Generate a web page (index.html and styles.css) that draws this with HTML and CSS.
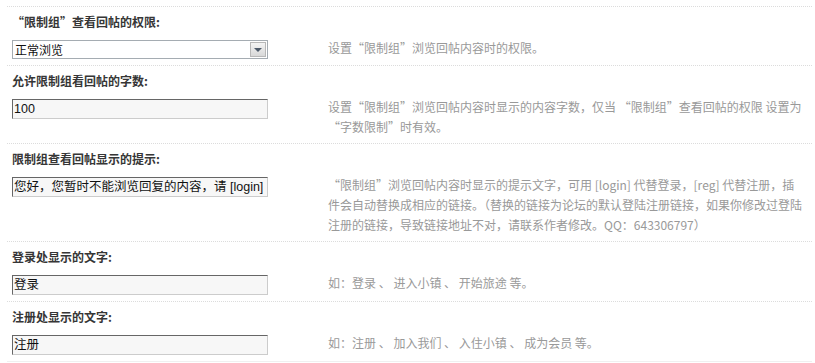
FILE: index.html
```html
<!DOCTYPE html>
<html lang="zh-CN">
<head>
<meta charset="utf-8">
<title>限制组设置</title>
<link rel="stylesheet" href="styles.css">
</head>
<body>
<div class="form">
  <div class="group">
    <div class="label">“限制组”查看回帖的权限:</div>
    <div class="field">
      <div class="control">
        <div class="select"><span class="select-text">正常浏览</span><span class="select-btn"><span class="arrow"></span></span></div>
      </div>
      <div class="desc">设置“限制组”浏览回帖内容时的权限。</div>
    </div>
  </div>
  <div class="group">
    <div class="label">允许限制组看回帖的字数:</div>
    <div class="field">
      <div class="control"><div class="input">100</div></div>
      <div class="desc">设置“限制组”浏览回帖内容时显示的内容字数，仅当 “限制组”查看回帖的权限 设置为<br>“字数限制”时有效。</div>
    </div>
  </div>
  <div class="group">
    <div class="label">限制组查看回帖显示的提示:</div>
    <div class="field">
      <div class="control"><div class="input">您好，您暂时不能浏览回复的内容，请 [login]</div></div>
      <div class="desc">“限制组”浏览回帖内容时显示的提示文字，可用 [login] 代替登录，[reg] 代替注册，插<br>件会自动替换成相应的链接。（替换的链接为论坛的默认登陆注册链接，如果你修改过登陆<br>注册的链接，导致链接地址不对，请联系作者修改。QQ：643306797）</div>
    </div>
  </div>
  <div class="group">
    <div class="label">登录处显示的文字:</div>
    <div class="field">
      <div class="control"><div class="input">登录</div></div>
      <div class="desc">如：登录 、 进入小镇 、 开始旅途 等。</div>
    </div>
  </div>
  <div class="group last">
    <div class="label">注册处显示的文字:</div>
    <div class="field">
      <div class="control"><div class="input">注册</div></div>
      <div class="desc">如：注册 、 加入我们 、 入住小镇 、 成为会员 等。</div>
    </div>
  </div>
</div>
</body>
</html>
```

FILE: styles.css
```css
html, body {
  margin: 0;
  padding: 0;
  background: #fff;
}

body {
  font-family: "Noto Sans CJK SC", "Liberation Sans", sans-serif;
  font-size: 12px;
  color: #333;
}

.form {
  margin: 6px 3px 0 7px;
}

.group {
  border-top: 1px dotted #dcdcdc;
}

.group.last {
  border-bottom: 1px solid #f0f0f0;
}

.label {
  padding: 8px 5px 9px;
  line-height: 14px;
  font-weight: bold;
  color: #363636;
  white-space: nowrap;
}

.field {
  display: grid;
  grid-template-columns: 321px 1fr;
  align-items: start;
  padding-bottom: 6px;
}

.control {
  padding: 2px 0 0 5px;
}

.input {
  box-sizing: border-box;
  width: 256px;
  height: 20px;
  border: 1px solid;
  border-color: #666 #ccc #ccc #666;
  background: #f7f7f7;
  padding: 0 1px;
  font-family: "Liberation Sans", "Noto Sans CJK SC", sans-serif;
  font-size: 12.5px;
  line-height: 18px;
  color: #111;
  white-space: nowrap;
  overflow: hidden;
}

.select {
  box-sizing: border-box;
  width: 256px;
  height: 19px;
  border: 1px solid #a5acb2;
  background: #fff;
  display: flex;
  align-items: stretch;
  justify-content: space-between;
}

.select-text {
  padding-left: 2px;
  line-height: 17px;
  font-size: 12px;
  color: #111;
}

.select-btn {
  box-sizing: border-box;
  width: 16px;
  margin: 1px;
  border: 1px solid #b8b8b8;
  background: linear-gradient(#f4f4f4, #d8d8d8);
  display: flex;
  align-items: center;
  justify-content: center;
}

.arrow {
  width: 0;
  height: 0;
  border-left: 4px solid transparent;
  border-right: 4px solid transparent;
  border-top: 4px solid #4d5a6a;
}

.desc {
  line-height: 20px;
  color: #999;
  white-space: nowrap;
}
```
